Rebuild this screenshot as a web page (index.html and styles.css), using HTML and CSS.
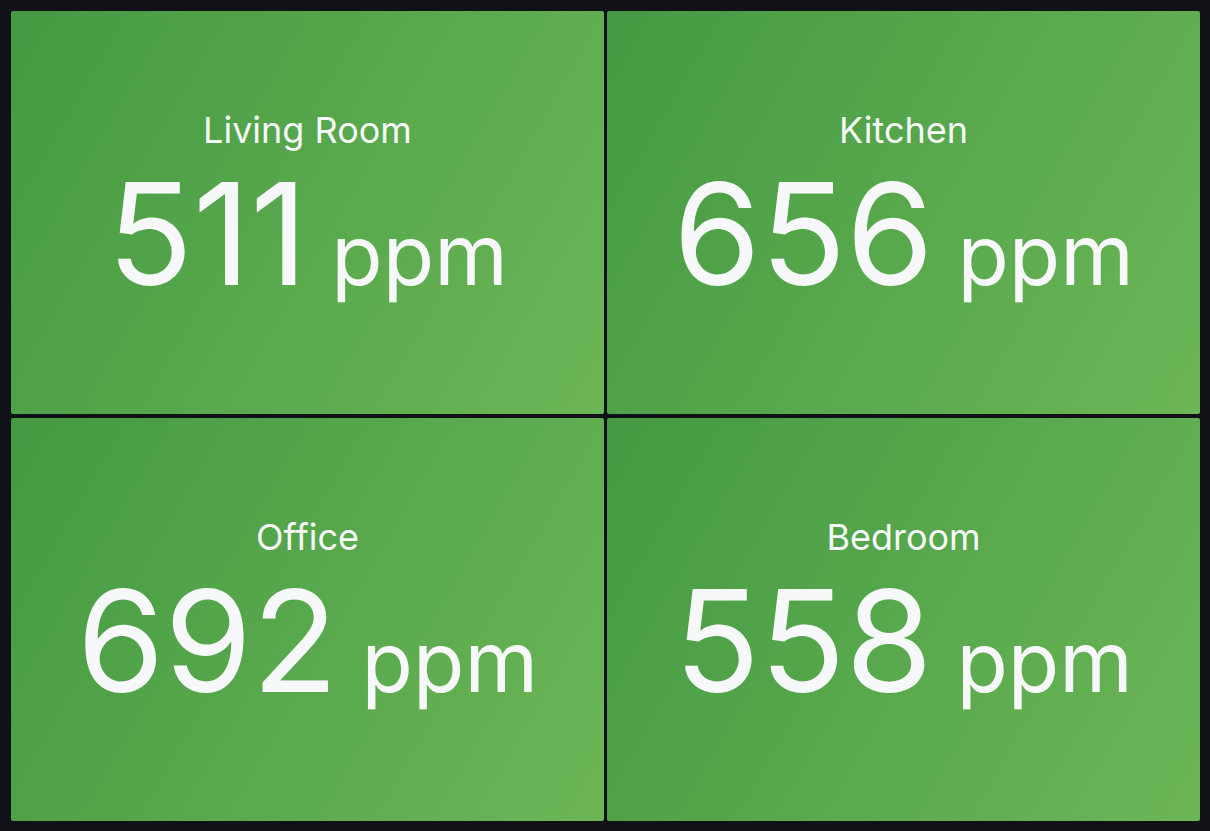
FILE: index.html
```html
<!DOCTYPE html>
<html>
<head>
<meta charset="utf-8">
<link rel="stylesheet" href="styles.css">
</head>
<body>
<div class="grid">
  <div class="panel">
    <div class="title">Living Room</div>
    <div class="value">511<span class="unit"> ppm</span></div>
  </div>
  <div class="panel">
    <div class="title">Kitchen</div>
    <div class="value">656<span class="unit"> ppm</span></div>
  </div>
  <div class="panel">
    <div class="title">Office</div>
    <div class="value">692<span class="unit"> ppm</span></div>
  </div>
  <div class="panel">
    <div class="title">Bedroom</div>
    <div class="value">558<span class="unit"> ppm</span></div>
  </div>
</div>
</body>
</html>
```
FILE: styles.css
```css
html, body {
  margin: 0;
  padding: 0;
  background: #111217;
  width: 1210px;
  height: 831px;
  overflow: hidden;
  font-family: Inter, "Noto Sans", sans-serif;
}
.grid {
  box-sizing: border-box;
  width: 1210px;
  height: 831px;
  padding: 11px 10px 10px 11px;
  display: grid;
  grid-template-columns: 1fr 1fr;
  grid-template-rows: 1fr 1fr;
  column-gap: 3px;
  row-gap: 4px;
}
.panel {
  border-radius: 2px;
  padding-bottom: 20px;
  background: linear-gradient(120deg, #449a42, #6cb657);
  display: flex;
  flex-direction: column;
  align-items: center;
  justify-content: center;
  color: #f7f8fa;
}
.title {
  font-size: 36px;
  line-height: 42px;
  padding: 8px 0 12px;
  font-weight: 400;
}
.value {
  font-size: 141px;
  line-height: 1;
  font-weight: 400;
  white-space: nowrap;
}
.unit {
  font-size: 84px;
}
```
